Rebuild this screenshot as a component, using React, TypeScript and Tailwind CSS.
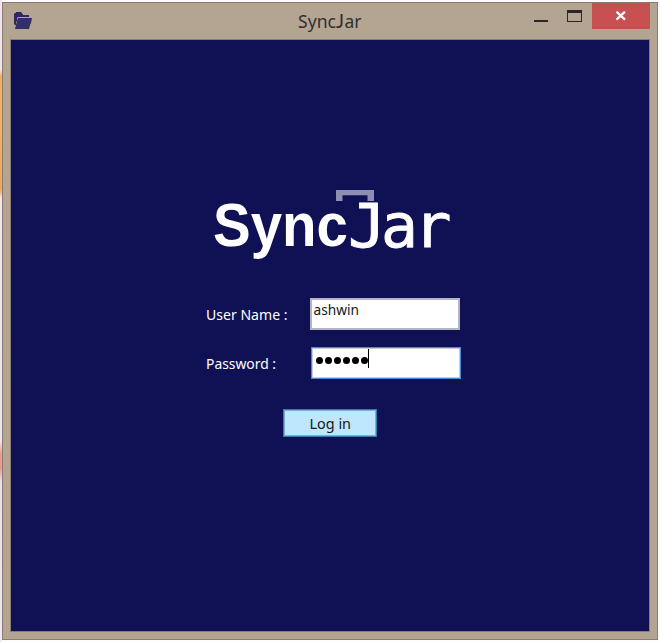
import React from "react";

function FolderIcon() {
  return (
    <svg width="19" height="18" viewBox="0 0 19 18" className="block">
      <path d="M1 1h1V0h5l1 1v1h1v1h6v2H4L3 6v3L2 10v3H1l-1-1V2z" fill="#2d2a61" />
      <path d="M4 6h14l-1 5-1 2-1 4H1l1-4 1-4z" fill="#342f69" />
    </svg>
  );
}

function Logo() {
  return (
    <svg width="250" height="80" viewBox="210 184 250 80" className="block">
      <path d="M336 201V190H374V201H367.500V195.300H342.500V201Z" fill="#8f8eb2" />
      <text x="213" y="246" fontSize="61.500" fontWeight="700" textLength="135" lengthAdjust="spacingAndGlyphs" fill="#fff" fontFamily="'Liberation Sans', Arial, sans-serif">Sync</text>
      <g fill="#fff" stroke="#fff" strokeWidth="0.8" fontSize="60" fontFamily="'DejaVu Sans Mono', monospace">
        <text x="348" y="247" textLength="38" lengthAdjust="spacingAndGlyphs">J</text>
        <text x="381" y="247" textLength="37" lengthAdjust="spacingAndGlyphs">a</text>
        <text x="413.500" y="247" textLength="38" lengthAdjust="spacingAndGlyphs">r</text>
      </g>
    </svg>
  );
}

function TitleBar() {
  return (
    <header className="flex h-9 items-start">
      <div className="w-[295px] pt-[9px] pl-[11px]"><FolderIcon /></div>
      <h1 className="grow pt-[5px]">
        <svg width="68" height="26" className="block">
          <g fontSize="18.500" fill="#303030">
            <text x="0" y="20" textLength="38" lengthAdjust="spacingAndGlyphs">Sync</text>
            <text x="38" y="20" fontSize="18.500" textLength="8" lengthAdjust="spacingAndGlyphs" fontFamily="Lato, sans-serif">J</text>
            <text x="46.500" y="20" textLength="17" lengthAdjust="spacingAndGlyphs">ar</text>
          </g>
        </svg>
      </h1>
      <div className="flex w-[123px] shrink-0 items-start">
        <svg width="58" height="26" shapeRendering="crispEdges">
          <rect x="0" y="17" width="14" height="2" fill="#282828" />
          <path d="M33 7h15v12H33zm1 3v8h13v-8z" fill="#282828" fillRule="evenodd" />
        </svg>
        <div className="flex h-[26px] w-[58px] items-center justify-center bg-[#c75050]">
          <svg width="12" height="10" viewBox="0 0 12 10" className="-mt-px">
            <path d="M1.500 .7L10 8.700M10 .7L1.500 8.700" stroke="#fff" strokeWidth="2.300" />
          </svg>
        </div>
      </div>
    </header>
  );
}

function Label({ text, width }: { text: string; width: number }) {
  return (
    <svg width="104" height="24" className="block shrink-0">
      <text x="0" y="18" fontSize="15" textLength={width} lengthAdjust="spacingAndGlyphs" fill="#fff">{text}</text>
    </svg>
  );
}

export default function App() {
  return (
    <div className="flex h-[642px] w-[660px] bg-[#fdfbfc] font-['Noto_Sans','Open_Sans',sans-serif]">
      <div className="w-[2px] bg-[linear-gradient(to_bottom,#f1e4ee_0px,#f1e4ee_70px,#f3ad61_76px,#f4b263_120px,#efa55e_190px,#f2e7ec_198px,#f0e6f0_440px,#ec9a8c_454px,#ec9a8c_468px,#eddfed_482px,#f1e8f1_642px)]" />
      <div className="mt-[2px] h-[638px] w-[656px] border border-[#8a7d70] bg-[#b4a592]">
        <TitleBar />
        <main className="ml-[7px] h-[593px] w-[640px] border border-[#8c7d72] bg-[#101055]">
          <div className="pt-[144px] pl-[199px]"><Logo /></div>
          <div className="mt-[34px] ml-[195px] flex h-8 items-center">
            <Label text="User Name :" width={81.5} />
            <div className="h-8 w-[150px] border-2 border-[#b5b4c4] bg-white">
              <svg width="146" height="28" className="block overflow-visible">
                <text x="1.500" y="15" fontSize="15" textLength="45.500" lengthAdjust="spacingAndGlyphs" fill="#171717">ashwin</text>
              </svg>
            </div>
          </div>
          <div className="mt-[17px] ml-[195px] flex h-8 items-center">
            <Label text="Password :" width={70} />
            <div className="ml-px h-8 w-[150px] border border-[#4a8bd8] bg-white">
              <div className="flex h-[30px] border border-[#c5cce0] pl-[3px]">
                <div className="flex gap-[2px] pt-[8px]">
                  {[0, 1, 2, 3, 4, 5].map((i) => (
                    <span key={i} className="size-[7px] rounded-full bg-black" />
                  ))}
                </div>
                <span className="h-[19px] w-px bg-black" />
              </div>
            </div>
          </div>
          <button className="mt-[30px] ml-[272px] block h-7 w-[94px] border border-[#367cae] bg-[#bee6fd]">
            <span className="block h-[26px] border border-[#80aed3]">
              <svg width="90" height="24" className="block">
                <text x="24.500" y="18" fontSize="15" textLength="41.500" lengthAdjust="spacingAndGlyphs" fill="#171717">Log in</text>
              </svg>
            </span>
          </button>
        </main>
      </div>
    </div>
  );
}
